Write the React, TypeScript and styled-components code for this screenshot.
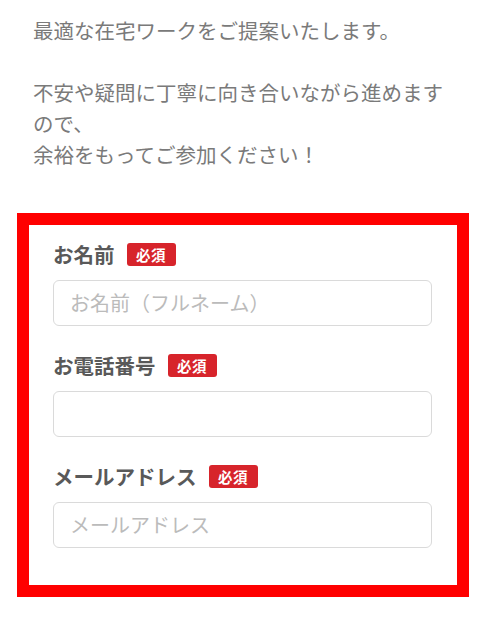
import React from 'react'
import styled, { createGlobalStyle } from 'styled-components'

const GlobalStyle = createGlobalStyle`
  html, body {
    margin: 0;
    padding: 0;
    background: #fff;
  }
  body {
    font-family: "Noto Sans CJK JP", "Noto Sans", sans-serif;
  }
`

const Page = styled.div`
  width: 485px;
  min-height: 630px;
  overflow: hidden;
`

const Intro = styled.div`
  padding: 14.5px 33px 0;
  color: #7a7a7a;
  font-size: 20.5px;
  line-height: 31px;

  p {
    margin: 0;
  }
`

const FormBox = styled.form`
  margin: 43px 16px 0 17px;
  border: 12px solid #ff0000;
  padding: 14.5px 25px 37px 24px;
  background: #fff;
`

const Field = styled.div`
  & + & {
    margin-top: 24.5px;
  }
`

const LabelRow = styled.div`
  display: flex;
  align-items: center;
  height: 30px;
  margin-bottom: 10.5px;
`

const Label = styled.label`
  font-size: 20.5px;
  font-weight: 700;
  color: #595959;
  line-height: 30px;
`

const Required = styled.span`
  margin-left: 12px;
  width: 49px;
  height: 23px;
  border-radius: 3px;
  background: #d7242b;
  color: #fff;
  font-size: 14.5px;
  font-weight: 700;
  display: flex;
  align-items: center;
  justify-content: center;
  letter-spacing: 0.5px;
`

const Input = styled.input`
  display: block;
  box-sizing: border-box;
  width: 100%;
  height: 46px;
  border: 1px solid #dadada;
  border-radius: 6px;
  padding: 0 16px;
  font-family: inherit;
  font-size: 20px;
  color: #333;
  background: #fff;
  outline: none;

  &::placeholder {
    color: #bbb;
  }
`

const fields = [
  { id: 'name', label: 'お名前', placeholder: 'お名前（フルネーム）', type: 'text' },
  { id: 'tel', label: 'お電話番号', placeholder: '', type: 'tel' },
  { id: 'mail', label: 'メールアドレス', placeholder: 'メールアドレス', type: 'email' },
]

const App = () => {
  return (
    <Page>
      <GlobalStyle />
      <Intro>
        <p>最適な在宅ワークをご提案いたします。</p>
        <p>&nbsp;</p>
        <p>不安や疑問に丁寧に向き合いながら進めますので、</p>
        <p>余裕をもってご参加ください！</p>
      </Intro>
      <FormBox onSubmit={e => e.preventDefault()}>
        {fields.map(f => (
          <Field key={f.id}>
            <LabelRow>
              <Label htmlFor={f.id}>{f.label}</Label>
              <Required>必須</Required>
            </LabelRow>
            <Input id={f.id} type={f.type} placeholder={f.placeholder} />
          </Field>
        ))}
      </FormBox>
    </Page>
  )
}

export default App
